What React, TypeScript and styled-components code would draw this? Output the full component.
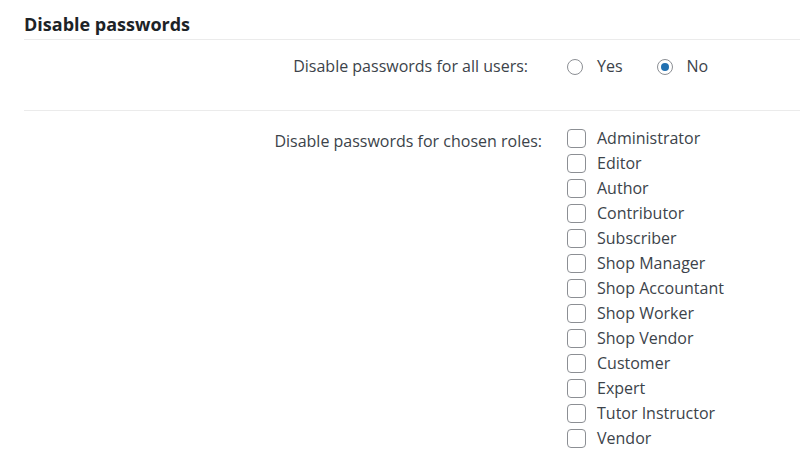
import React from "react";
import styled, { createGlobalStyle } from "styled-components";

const Global = createGlobalStyle`
  html, body { margin: 0; padding: 0; background: #ffffff; }
  body { font-family: "Open Sans", "Noto Sans", sans-serif; color: #3c434a; }
`;

const Page = styled.div`
  padding-left: 24px;
  width: 776px;
`;

const Title = styled.h2`
  margin: 0;
  padding-top: 11px;
  height: 28px;
  font-size: 18px;
  line-height: 26px;
  font-weight: 700;
  color: #1d2327;
  border-bottom: 1px solid #ebebeb;
`;

const Row = styled.div<{ $height?: number }>`
  display: grid;
  grid-template-columns: 518px 1fr;
  column-gap: 25px;
  align-items: start;
  ${(p) => (p.$height ? `height: ${p.$height}px;` : "")}
  border-bottom: ${(p) => (p.$height ? "1px solid #ebebeb" : "none")};
  box-sizing: border-box;
`;

const Label = styled.div<{ $pr?: number; $pt: number }>`
  text-align: right;
  font-size: 16px;
  line-height: 22px;
  padding-right: ${(p) => p.$pr ?? 0}px;
  padding-top: ${(p) => p.$pt}px;
  color: #3c434a;
`;

const Radios = styled.div`
  display: flex;
  gap: 34px;
  padding-top: 14px;
`;

const Option = styled.label<{ $gap?: number }>`
  display: flex;
  align-items: center;
  gap: ${(p) => p.$gap ?? 14}px;
  font-size: 16px;
  line-height: 25px;
  color: #3c434a;
`;

const RadioDot = styled.span<{ $checked?: boolean }>`
  width: 16px;
  height: 16px;
  box-sizing: border-box;
  border-radius: 50%;
  border: 1px solid #8c8f94;
  display: flex;
  align-items: center;
  justify-content: center;
  &::after {
    content: "";
    width: 8px;
    height: 8px;
    border-radius: 50%;
    background: ${(p) => (p.$checked ? "#2271b1" : "transparent")};
  }
`;

const CheckList = styled.div`
  display: flex;
  flex-direction: column;
  padding-top: 15px;
`;

const Box = styled.span`
  width: 19px;
  height: 19px;
  box-sizing: border-box;
  border: 1px solid #8c8f94;
  border-radius: 4px;
  background: #fff;
`;

const roles = [
  "Administrator",
  "Editor",
  "Author",
  "Contributor",
  "Subscriber",
  "Shop Manager",
  "Shop Accountant",
  "Shop Worker",
  "Shop Vendor",
  "Customer",
  "Expert",
  "Tutor Instructor",
  "Vendor",
];

export default function App() {
  return (
    <>
      <Global />
      <Page>
        <Title>Disable passwords</Title>
        <Row $height={71}>
          <Label $pr={14} $pt={15}>Disable passwords for all users:</Label>
          <Radios>
            <Option>
              <RadioDot />
              Yes
            </Option>
            <Option>
              <RadioDot $checked />
              No
            </Option>
          </Radios>
        </Row>
        <Row>
          <Label $pt={19}>Disable passwords for chosen roles:</Label>
          <CheckList>
            {roles.map((r) => (
              <Option key={r} $gap={11}>
                <Box />
                {r}
              </Option>
            ))}
          </CheckList>
        </Row>
      </Page>
    </>
  );
}
